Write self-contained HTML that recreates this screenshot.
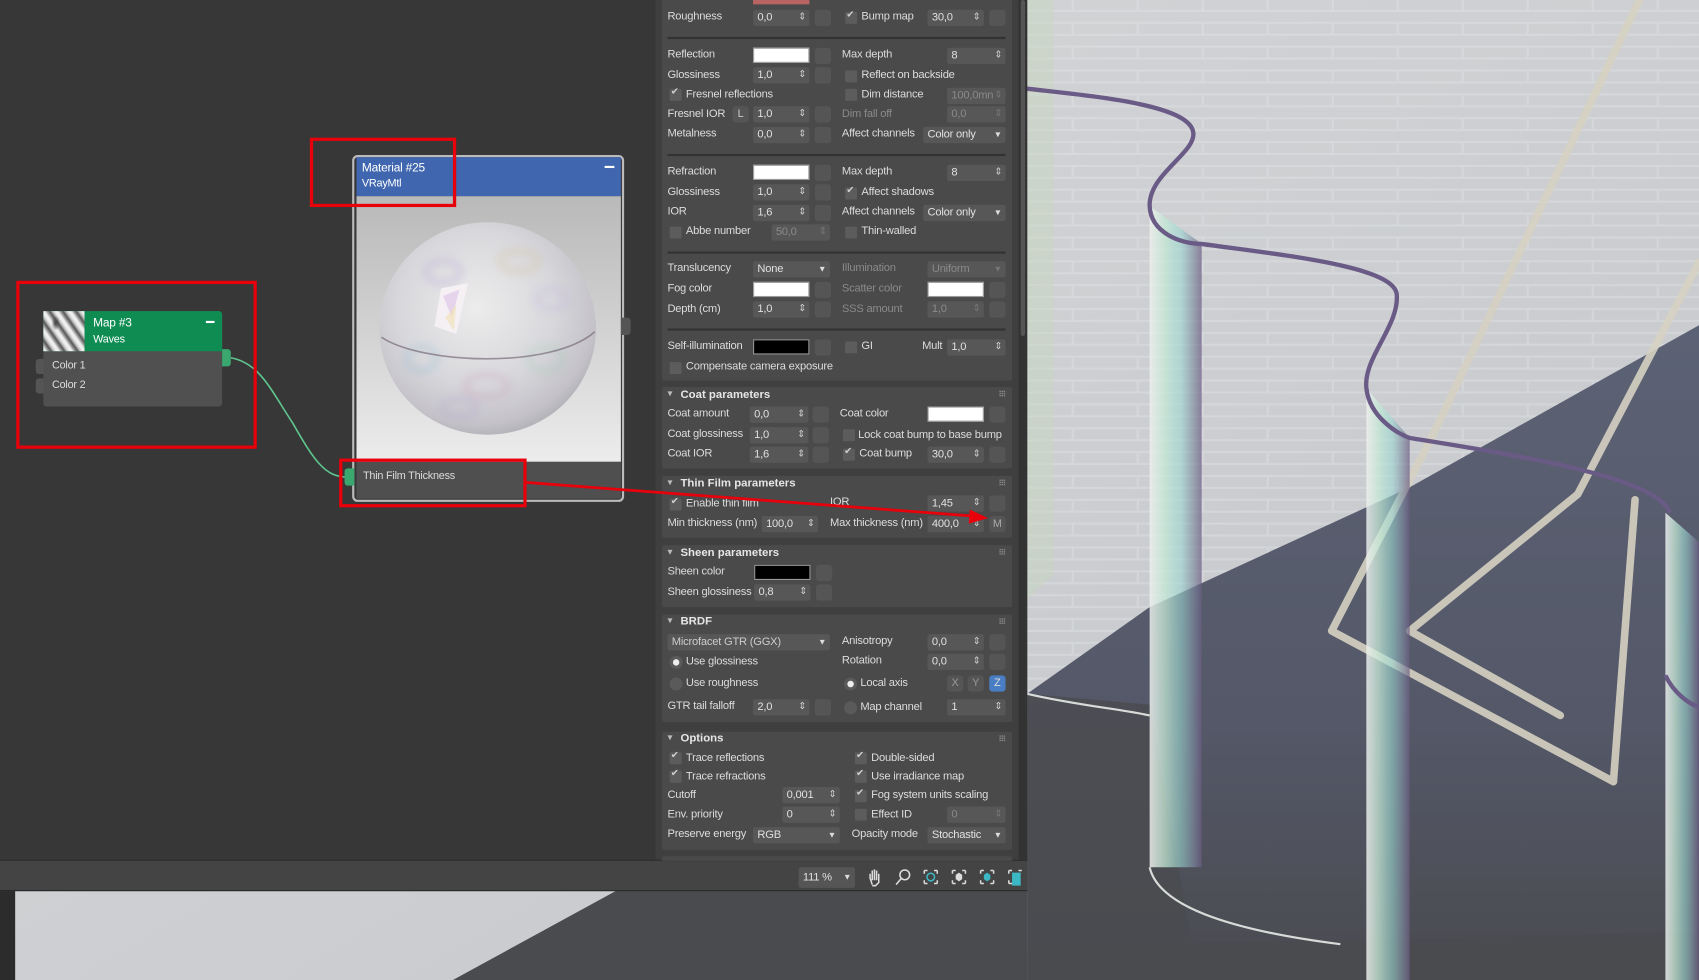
<!DOCTYPE html>
<html><head><meta charset="utf-8">
<style>
*{margin:0;padding:0;box-sizing:border-box}
html,body{width:1699px;height:980px;overflow:hidden;background:#3a3a3a}
#w{position:absolute;left:0;top:0;width:1568px;height:904px;transform:scale(1.08355,1.08407);transform-origin:0 0;overflow:hidden;font-family:"Liberation Sans",sans-serif}
.a{position:absolute}
.t{position:absolute;font-size:10.3px;letter-spacing:-0.2px;color:#dcdcdc;white-space:nowrap;line-height:14px}
.g{color:#8a8a8a}
.f{position:absolute;height:15px;background:#575757;border-radius:2px;font-size:10.3px;letter-spacing:-0.2px;color:#e0e0e0;padding-left:4px;line-height:15px;white-space:nowrap;overflow:hidden}
.f.sp::after{content:"⇕";position:absolute;right:3px;top:0;font-family:"DejaVu Sans",sans-serif;font-size:9px;color:#cfcfcf}
.f.dd::after{content:"▼";position:absolute;right:5px;top:0;font-family:"DejaVu Sans",sans-serif;font-size:6px;color:#ddd}
.f.dis{color:#8a8a8a}
.f.dis::after{color:#777}
.m{position:absolute;width:15px;height:15px;background:#555;border-radius:3px}
.sw{position:absolute;width:52px;height:14px;border:1px solid #999;background:#fff}
.c{position:absolute;width:11px;height:11px;background:#5c5c5c;border-radius:1px}
.c.k::after{content:"✔";position:absolute;left:1px;top:-2px;font-family:"DejaVu Sans",sans-serif;font-size:9px;color:#cfcfcf}
.r{position:absolute;width:12px;height:12px;border-radius:50%;background:#5a5a5a}
.r.on::after{content:"";position:absolute;left:3px;top:3px;width:6px;height:6px;border-radius:50%;background:#eee}
.grp{position:absolute;left:610px;width:325px;background:#4a4a4a;border:1px solid #404040;border-radius:3px}
.h{position:absolute;font-size:10.5px;font-weight:bold;color:#e6e6e6;line-height:14px}
.h::before{content:"▼";font-size:6px;font-weight:normal;color:#bbb;position:absolute;left:-12px;top:0;font-family:"DejaVu Sans",sans-serif}
.sep{position:absolute;left:616px;width:312px;height:2px;background:#333}
.grip{position:absolute;left:922px;width:6px;height:6px;background:radial-gradient(circle,#888 0.6px,transparent 0.9px) 0 0/2px 2px}
</style></head><body><div id="w">

<!-- viewport background -->
<svg class="a" style="left:0;top:0" width="1568" height="904">
<defs>
<linearGradient id="wall" x1="0" y1="0" x2="1" y2="1"><stop offset="0" stop-color="#d6d7d9"/><stop offset="0.5" stop-color="#cdcfd2"/><stop offset="1" stop-color="#c3c5ca"/></linearGradient>
<linearGradient id="flr" x1="0" y1="0" x2="0" y2="1"><stop offset="0" stop-color="#5c6275"/><stop offset="0.6" stop-color="#545868"/><stop offset="1" stop-color="#4a4b50"/></linearGradient>
<linearGradient id="strip" x1="0" y1="0" x2="1" y2="0"><stop offset="0" stop-color="#eef0ee" stop-opacity=".85"/><stop offset=".3" stop-color="#c4e8d6" stop-opacity=".75"/><stop offset=".6" stop-color="#9cd8d2" stop-opacity=".6"/><stop offset="1" stop-color="#6a5a80" stop-opacity=".7"/></linearGradient>
<pattern id="brick" width="60" height="22" patternUnits="userSpaceOnUse"><path d="M0,21 H60 M30,0 V11 M0,10 H60" stroke="#e6e7e9" stroke-width="2" opacity=".35"/></pattern>
</defs>
<rect x="0" y="0" width="1568" height="904" fill="url(#wall)"/>
<rect x="948" y="0" width="620" height="640" fill="url(#brick)"/>
<polygon points="948,640 1061,560 1300,450 1568,300 1568,904 948,904" fill="url(#flr)"/>
<polygon points="948,640 1061,650 1100,870 1568,860 1568,904 948,904" fill="#4a4b4f" opacity=".8"/>
<polygon points="570,821 948,821 948,904 418,904" fill="#4a4b4e"/>
<rect x="0" y="821" width="14" height="83" fill="#2c2c2c"/>
<!-- stand -->
<g stroke="#d6d1c2" stroke-width="7" fill="none" stroke-linecap="round" stroke-linejoin="round" opacity=".9">
<path d="M1513,0 L1321,404 L1229,582 L1489,721"/>
<path d="M1568,242 L1456,456 L1301,582 L1440,660"/>
<path d="M1509,461 L1489,721"/>
</g>
<!-- wave strips -->
<path d="M1061,190 L1109,225 L1109,800 L1061,800 Z" fill="url(#strip)"/>
<path d="M1261,358 L1301,404 L1301,904 L1261,904 Z" fill="url(#strip)"/>
<path d="M1537,473 L1568,500 L1568,904 L1537,904 Z" fill="url(#strip)"/>
<path d="M941,0 L972,0 L972,530 L941,560 Z" fill="#c8d8c0" opacity=".5"/>
<path d="M941,81 C1000,88 1095,95 1101,121 C1106,140 1060,160 1061,190 C1062,215 1090,225 1109,225 C1180,235 1285,245 1289,271 C1292,300 1258,330 1261,358 C1264,385 1290,400 1301,404 C1400,420 1530,440 1541,473" stroke="#6a5a86" stroke-width="4" fill="none"/>
<path d="M1537,623 C1545,640 1560,650 1568,652" stroke="#6a5a86" stroke-width="4" fill="none"/>
<path d="M948,640 C990,650 1040,655 1061,660 M1061,800 C1070,840 1150,860 1237,871" stroke="#d8dcd8" stroke-width="2" fill="none"/>
</svg>

<!-- node editor -->
<div class="a" style="left:0;top:0;width:948px;height:822px;background:#373737"></div>
<div class="a" style="left:0;top:793px;width:948px;height:29px;background:#444;border-top:1px solid #2a2a2a;border-bottom:1px solid #2a2a2a"></div>

<!-- wire -->
<svg class="a" style="left:0;top:0" width="948" height="822">
<path d="M213,330 C240,335 250,360 270,390 C290,425 300,440 320,440" stroke="#5fc58e" stroke-width="1.5" fill="none"/>
</svg>

<!-- map node -->
<div class="a" style="left:33px;top:331px;width:8px;height:14px;background:#555;border-radius:3px 0 0 3px"></div>
<div class="a" style="left:33px;top:349px;width:8px;height:14px;background:#555;border-radius:3px 0 0 3px"></div>
<div class="a" style="left:40px;top:287px;width:165px;height:88px;background:#505050;border-radius:3px"></div>
<div class="a" style="left:40px;top:287px;width:165px;height:37px;background:#0e8c52;border-radius:3px 3px 0 0"></div>
<div class="a" style="left:40px;top:287px;width:38px;height:37px;background:radial-gradient(ellipse 4px 7px at 30% 30%,#444,transparent),repeating-linear-gradient(55deg,#eee 0 2px,#999 4px,#555 6px,#bbb 8px,#eee 10px)"></div>
<div class="t" style="left:86px;top:291px;font-size:11px;color:#fff">Map #3</div>
<div class="t" style="left:86px;top:307px;font-size:10px;color:#fff">Waves</div>
<div class="a" style="left:190px;top:296px;width:8px;height:2px;background:#fff"></div>
<div class="t" style="left:48px;top:331px;font-size:10px">Color 1</div>
<div class="t" style="left:48px;top:349px;font-size:10px">Color 2</div>
<div class="a" style="left:205px;top:322px;width:8px;height:16px;background:#3aa86e;border-radius:0 3px 3px 0"></div>

<!-- material node -->
<div class="a" style="left:325px;top:143px;width:251px;height:320px;border:2px solid #bbb;border-radius:5px"></div>
<div class="a" style="left:329px;top:145px;width:244px;height:36px;background:#3f66ae"></div>
<div class="t" style="left:334px;top:148px;font-size:11px;color:#fff">Material #25</div>
<div class="t" style="left:334px;top:163px;font-size:10px;color:#fff">VRayMtl</div>
<div class="a" style="left:558px;top:153px;width:9px;height:2px;background:#fff"></div>
<div class="a" style="left:329px;top:181px;width:244px;height:245px;background:linear-gradient(#b9b9b9,#d7d7d7 60%,#ececec)"></div>
<svg class="a" style="left:329px;top:181px" width="244" height="245">
<defs><radialGradient id="sp2" cx="0.45" cy="0.4" r="0.65"><stop offset="0" stop-color="#ececec"/><stop offset=".55" stop-color="#d8d8dc"/><stop offset=".85" stop-color="#c4c2c8"/><stop offset="1" stop-color="#a8a8b0"/></radialGradient>
<filter id="bl"><feGaussianBlur stdDeviation="4"/></filter></defs>
<ellipse cx="121" cy="122" rx="100" ry="98" fill="url(#sp2)"/>
<g fill="none" stroke-width="5" opacity=".35" filter="url(#bl)"><ellipse cx="80" cy="70" rx="16" ry="10" stroke="#b49ad0"/><ellipse cx="150" cy="60" rx="18" ry="9" stroke="#d0b890"/><ellipse cx="60" cy="150" rx="14" ry="11" stroke="#90b8d0"/><ellipse cx="120" cy="175" rx="20" ry="10" stroke="#c89ab8"/><ellipse cx="175" cy="150" rx="16" ry="11" stroke="#a0c8b0"/><ellipse cx="95" cy="195" rx="16" ry="8" stroke="#b0a0d0"/><ellipse cx="180" cy="95" rx="14" ry="9" stroke="#c0b0e0"/></g>
<path d="M23,130 C60,155 180,160 220,125" stroke="#6a5a6a" stroke-width="1.5" fill="none" opacity=".6"/>
<path d="M78,85 L103,80 L92,127 L72,120 Z" fill="#f4f0f4"/>
<path d="M80,92 L95,86 L88,112 Z" fill="#e0c8e8" opacity=".7"/>
<path d="M82,112 L92,100 L90,124 Z" fill="#f0e0b0" opacity=".6"/>
</svg>
<div class="a" style="left:329px;top:426px;width:244px;height:34px;background:#4f4f4f"></div>
<div class="t" style="left:335px;top:433px;font-size:10px">Thin Film Thickness</div>
<div class="a" style="left:318px;top:432px;width:9px;height:16px;background:#3aa86e;border-radius:3px 0 0 3px"></div>
<div class="a" style="left:573px;top:293px;width:9px;height:16px;background:#555;border-radius:0 3px 3px 0"></div>

<!-- red annotations -->
<div class="a" style="left:286px;top:127px;width:135px;height:64px;border:3px solid #e8000b"></div>
<div class="a" style="left:15px;top:259px;width:222px;height:155px;border:3px solid #e8000b"></div>
<div class="a" style="left:313px;top:423px;width:173px;height:45px;border:3px solid #e8000b"></div>

<!-- parameter panel -->
<div class="a" style="left:605px;top:0;width:335px;height:793px;background:#3f3f3f"></div>
<div class="a" style="left:940px;top:0;width:8px;height:793px;background:#333"></div>
<div class="a" style="left:942px;top:0;width:4px;height:310px;background:#555;border-radius:2px"></div>
<div class="grp" style="top:-10px;height:362px"></div>

<div class="a" style="left:695px;top:-8px;width:52px;height:12px;background:#b86462"></div>
<div class="t" style="left:616px;top:9px">Roughness</div><div class="f sp" style="left:695px;top:9px;width:52px">0,0</div><div class="m" style="left:752px;top:9px"></div>
<div class="c k" style="left:780px;top:11px"></div><div class="t" style="left:795px;top:9px">Bump map</div><div class="f sp" style="left:856px;top:9px;width:52px">30,0</div><div class="m" style="left:913px;top:9px"></div>
<div class="sep" style="top:34px"></div>

<div class="t" style="left:616px;top:44px">Reflection</div><div class="sw" style="left:695px;top:44px"></div><div class="m" style="left:752px;top:44px"></div>
<div class="t" style="left:777px;top:44px">Max depth</div><div class="f sp" style="left:874px;top:44px;width:54px">8</div>
<div class="t" style="left:616px;top:63px">Glossiness</div><div class="f sp" style="left:695px;top:62px;width:52px">1,0</div><div class="m" style="left:752px;top:62px"></div>
<div class="c" style="left:780px;top:65px"></div><div class="t" style="left:795px;top:63px">Reflect on backside</div>
<div class="c k" style="left:618px;top:82px"></div><div class="t" style="left:633px;top:81px">Fresnel reflections</div>
<div class="c" style="left:780px;top:82px"></div><div class="t" style="left:795px;top:81px">Dim distance</div><div class="f sp dis" style="left:874px;top:81px;width:54px">100,0mn</div>
<div class="t" style="left:616px;top:99px">Fresnel IOR</div><div class="m" style="left:676px;top:98px;text-align:center;font-size:10px;color:#ccc;line-height:15px">L</div><div class="f sp" style="left:695px;top:98px;width:52px">1,0</div><div class="m" style="left:752px;top:98px"></div>
<div class="t g" style="left:777px;top:99px">Dim fall off</div><div class="f sp dis" style="left:874px;top:98px;width:54px">0,0</div>
<div class="t" style="left:616px;top:117px">Metalness</div><div class="f sp" style="left:695px;top:117px;width:52px">0,0</div><div class="m" style="left:752px;top:117px"></div>
<div class="t" style="left:777px;top:117px">Affect channels</div><div class="f dd" style="left:852px;top:117px;width:76px">Color only</div>
<div class="sep" style="top:142px"></div>

<div class="t" style="left:616px;top:152px">Refraction</div><div class="sw" style="left:695px;top:152px"></div><div class="m" style="left:752px;top:152px"></div>
<div class="t" style="left:777px;top:152px">Max depth</div><div class="f sp" style="left:874px;top:152px;width:54px">8</div>
<div class="t" style="left:616px;top:171px">Glossiness</div><div class="f sp" style="left:695px;top:170px;width:52px">1,0</div><div class="m" style="left:752px;top:170px"></div>
<div class="c k" style="left:780px;top:173px"></div><div class="t" style="left:795px;top:171px">Affect shadows</div>
<div class="t" style="left:616px;top:189px">IOR</div><div class="f sp" style="left:695px;top:189px;width:52px">1,6</div><div class="m" style="left:752px;top:189px"></div>
<div class="t" style="left:777px;top:189px">Affect channels</div><div class="f dd" style="left:852px;top:189px;width:76px">Color only</div>
<div class="c" style="left:618px;top:209px"></div><div class="t" style="left:633px;top:207px">Abbe number</div><div class="f sp dis" style="left:712px;top:207px;width:54px">50,0</div>
<div class="c" style="left:780px;top:209px"></div><div class="t" style="left:795px;top:207px">Thin-walled</div>
<div class="sep" style="top:232px"></div>

<div class="t" style="left:616px;top:241px">Translucency</div><div class="f dd" style="left:695px;top:241px;width:71px">None</div>
<div class="t g" style="left:777px;top:241px">Illumination</div><div class="f dd dis" style="left:856px;top:241px;width:72px">Uniform</div>
<div class="t" style="left:616px;top:260px">Fog color</div><div class="sw" style="left:695px;top:260px"></div><div class="m" style="left:752px;top:260px"></div>
<div class="t g" style="left:777px;top:260px">Scatter color</div><div class="sw" style="left:856px;top:260px"></div><div class="m" style="left:913px;top:260px"></div>
<div class="t" style="left:616px;top:279px">Depth (cm)</div><div class="f sp" style="left:695px;top:278px;width:52px">1,0</div><div class="m" style="left:752px;top:278px"></div>
<div class="t g" style="left:777px;top:279px">SSS amount</div><div class="f sp dis" style="left:856px;top:278px;width:52px">1,0</div><div class="m" style="left:913px;top:278px"></div>
<div class="sep" style="top:303px"></div>

<div class="t" style="left:616px;top:313px">Self-illumination</div><div class="sw" style="left:695px;top:313px;background:#000"></div><div class="m" style="left:752px;top:313px"></div>
<div class="c" style="left:780px;top:315px"></div><div class="t" style="left:795px;top:313px">GI</div>
<div class="t" style="left:851px;top:313px">Mult</div><div class="f sp" style="left:874px;top:313px;width:54px">1,0</div>
<div class="c" style="left:618px;top:334px"></div><div class="t" style="left:633px;top:332px">Compensate camera exposure</div>

<!-- Coat -->
<div class="grp" style="top:356px;height:77px"></div>
<div class="h" style="left:628px;top:357px">Coat parameters</div><div class="grip" style="top:360px"></div>
<div class="t" style="left:616px;top:375px">Coat amount</div><div class="f sp" style="left:692px;top:375px;width:54px">0,0</div><div class="m" style="left:750px;top:375px"></div>
<div class="t" style="left:775px;top:375px">Coat color</div><div class="sw" style="left:856px;top:375px"></div><div class="m" style="left:913px;top:375px"></div>
<div class="t" style="left:616px;top:394px">Coat glossiness</div><div class="f sp" style="left:692px;top:394px;width:54px">1,0</div><div class="m" style="left:750px;top:394px"></div>
<div class="c" style="left:778px;top:396px"></div><div class="t" style="left:792px;top:395px">Lock coat bump to base bump</div>
<div class="t" style="left:616px;top:412px">Coat IOR</div><div class="f sp" style="left:692px;top:412px;width:54px">1,6</div><div class="m" style="left:750px;top:412px"></div>
<div class="c k" style="left:778px;top:414px"></div><div class="t" style="left:793px;top:412px">Coat bump</div><div class="f sp" style="left:856px;top:412px;width:52px">30,0</div><div class="m" style="left:913px;top:412px"></div>

<!-- Thin film -->
<div class="grp" style="top:438px;height:59px"></div>
<div class="h" style="left:628px;top:439px">Thin Film parameters</div><div class="grip" style="top:442px"></div>
<div class="c k" style="left:618px;top:460px"></div><div class="t" style="left:633px;top:458px">Enable thin film</div>
<div class="t" style="left:766px;top:457px">IOR</div><div class="f sp" style="left:856px;top:457px;width:52px">1,45</div><div class="m" style="left:913px;top:457px"></div>
<div class="t" style="left:616px;top:476px">Min thickness (nm)</div><div class="f sp" style="left:703px;top:476px;width:52px">100,0</div>
<div class="t" style="left:766px;top:476px">Max thickness (nm)</div><div class="f sp" style="left:856px;top:476px;width:52px">400,0</div><div class="m" style="left:913px;top:476px;text-align:center;font-size:10px;color:#aaa;line-height:15px">M</div>

<!-- Sheen -->
<div class="grp" style="top:502px;height:59px"></div>
<div class="h" style="left:628px;top:503px">Sheen parameters</div><div class="grip" style="top:506px"></div>
<div class="t" style="left:616px;top:521px">Sheen color</div><div class="sw" style="left:696px;top:521px;background:#000"></div><div class="m" style="left:753px;top:521px"></div>
<div class="t" style="left:616px;top:540px">Sheen glossiness</div><div class="f sp" style="left:696px;top:539px;width:52px">0,8</div><div class="m" style="left:753px;top:539px"></div>

<!-- BRDF -->
<div class="grp" style="top:566px;height:101px"></div>
<div class="h" style="left:628px;top:566px">BRDF</div><div class="grip" style="top:570px"></div>
<div class="f dd" style="left:616px;top:585px;width:150px;color:#ccc">Microfacet GTR (GGX)</div>
<div class="t" style="left:777px;top:585px">Anisotropy</div><div class="f sp" style="left:856px;top:585px;width:52px">0,0</div><div class="m" style="left:913px;top:585px"></div>
<div class="r on" style="left:618px;top:605px"></div><div class="t" style="left:633px;top:604px">Use glossiness</div>
<div class="t" style="left:777px;top:603px">Rotation</div><div class="f sp" style="left:856px;top:603px;width:52px">0,0</div><div class="m" style="left:913px;top:603px"></div>
<div class="r" style="left:618px;top:625px"></div><div class="t" style="left:633px;top:624px">Use roughness</div>
<div class="r on" style="left:779px;top:625px"></div><div class="t" style="left:794px;top:624px">Local axis</div>
<div class="m" style="left:874px;top:623px;text-align:center;font-size:10px;color:#999;line-height:15px">X</div>
<div class="m" style="left:893px;top:623px;text-align:center;font-size:10px;color:#999;line-height:15px">Y</div>
<div class="m" style="left:913px;top:623px;background:#4a7ec4;text-align:center;font-size:10px;color:#ddd;line-height:15px">Z</div>
<div class="t" style="left:616px;top:645px">GTR tail falloff</div><div class="f sp" style="left:695px;top:645px;width:52px">2,0</div><div class="m" style="left:752px;top:645px"></div>
<div class="r" style="left:779px;top:647px"></div><div class="t" style="left:794px;top:646px">Map channel</div><div class="f sp" style="left:874px;top:645px;width:54px">1</div>

<!-- Options -->
<div class="grp" style="top:674px;height:111px"></div>
<div class="h" style="left:628px;top:674px">Options</div><div class="grip" style="top:678px"></div>
<div class="c k" style="left:618px;top:694px"></div><div class="t" style="left:633px;top:693px">Trace reflections</div>
<div class="c k" style="left:789px;top:694px"></div><div class="t" style="left:804px;top:693px">Double-sided</div>
<div class="c k" style="left:618px;top:711px"></div><div class="t" style="left:633px;top:710px">Trace refractions</div>
<div class="c k" style="left:789px;top:711px"></div><div class="t" style="left:804px;top:710px">Use irradiance map</div>
<div class="t" style="left:616px;top:727px">Cutoff</div><div class="f sp" style="left:722px;top:726px;width:53px">0,001</div>
<div class="c k" style="left:789px;top:729px"></div><div class="t" style="left:804px;top:727px">Fog system units scaling</div>
<div class="t" style="left:616px;top:745px">Env. priority</div><div class="f sp" style="left:722px;top:744px;width:53px">0</div>
<div class="c" style="left:789px;top:746px"></div><div class="t" style="left:804px;top:745px">Effect ID</div><div class="f sp dis" style="left:874px;top:744px;width:54px">0</div>
<div class="t" style="left:616px;top:763px">Preserve energy</div><div class="f dd" style="left:695px;top:763px;width:80px">RGB</div>
<div class="t" style="left:786px;top:763px">Opacity mode</div><div class="f dd" style="left:856px;top:763px;width:72px">Stochastic</div>
<div class="grp" style="top:789px;height:6px"></div>

<!-- red arrow -->
<svg class="a" style="left:0;top:0" width="948" height="822">
<line x1="485" y1="445" x2="898" y2="476" stroke="#e8000b" stroke-width="2.5"/>
<polygon points="912,478 895,470 894,483" fill="#e8000b"/>
</svg>

<!-- status bar -->
<div class="f dd" style="left:737px;top:800px;width:52px;height:19px;line-height:19px;background:#555">111 %</div>
<svg class="a" style="left:798px;top:800px" width="146" height="19">
<g fill="none" stroke-width="1.4">
<path d="M7,16 L5,10 L5,6 M7,12 L7,3 M9,12 L9,2 M11,12 L11,3 M13,12 L13,6 L13,14 L10,17 L7,17" stroke="#ddd"/>
<circle cx="37" cy="7" r="4.5" stroke="#ddd"/><path d="M34,10 L29,16" stroke="#ddd"/>
<circle cx="61" cy="9" r="3.5" stroke="#3bb8c4"/><path d="M55,3 h3 M64,3 h3 M55,3 v3 M67,3 v3 M55,15 h3 M64,15 h3 M55,15 v-3 M67,15 v-3" stroke="#ddd"/>
<path d="M81,3 h3 M90,3 h3 M81,3 v3 M93,3 v3 M81,15 h3 M90,15 h3 M81,15 v-3 M93,15 v-3" stroke="#ddd"/><path d="M84,7 L87,5 L90,7 L90,11 L87,13 L84,11 Z" fill="#ddd" stroke="none"/>
<path d="M107,3 h3 M116,3 h3 M107,3 v3 M119,3 v3 M107,15 h3 M116,15 h3 M107,15 v-3 M119,15 v-3" stroke="#ddd"/><path d="M110,7 L113,5 L116,7 L116,11 L113,13 L110,11 Z" fill="#3bb8c4" stroke="none"/>
<path d="M133,3 h3 M142,3 h3 M133,3 v3 M133,15 h3 M133,15 v-3" stroke="#ddd"/><path d="M136,5 h8 v12 h-8 z" fill="#3bb8c4" stroke="none"/>
</g></svg>

</div></body></html>
